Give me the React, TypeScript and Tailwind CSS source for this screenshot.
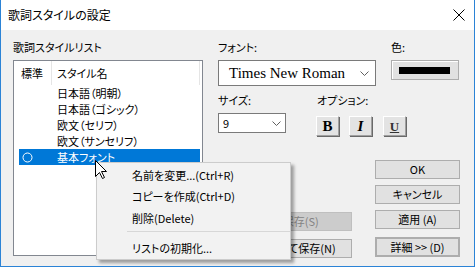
import React from "react";

const jp = "font-['Noto_Sans_CJK_JP',sans-serif] [font-feature-settings:'palt']";

function Chevron() {
  return (
    <svg width="9" height="5" viewBox="0 0 9 5" className="block">
      <polyline points="0.5,0.5 4.5,4.5 8.5,0.5" fill="none" stroke="#606060" strokeWidth="1" />
    </svg>
  );
}

function Bevel({ children }: { children: React.ReactNode }) {
  return (
    <div className="w-[23px] h-[20px] flex items-center justify-center bg-[#e3e3e3] border border-t-white border-l-white border-r-[#a0a0a0] border-b-[#a0a0a0] shadow-[1px_1px_0_#696969]">
      {children}
    </div>
  );
}

function Btn({ children, cls = "" }: { children: React.ReactNode; cls?: string }) {
  return (
    <div className={`flex items-center justify-center bg-[#e1e1e1] border border-[#adadad] text-[11px] leading-none ${cls}`}>
      {children}
    </div>
  );
}

export default function App() {
  const items = ["日本語（明朝）", "日本語（ゴシック）", "欧文（セリフ）", "欧文（サンセリフ）"];
  return (
    <div className={`relative w-[475px] h-[267px] overflow-hidden flex flex-col bg-white border-x border-b border-[#2b83d6] text-black ${jp}`}>
      {/* Title bar */}
      <div className="h-[30px] flex items-center justify-between bg-white pl-[7px] pr-[9px]">
        <span className="text-[12px] leading-none">歌詞スタイルの設定</span>
        <svg width="12" height="12" viewBox="0 0 12 12">
          <path d="M0.5 0.5 L11.5 11.5 M11.5 0.5 L0.5 11.5" stroke="#000" strokeWidth="1" />
        </svg>
      </div>

      {/* Content */}
      <div className="flex-1 bg-[#f0f0f0] flex pl-[12px]">
        {/* Left column */}
        <div className="w-[190px] pt-[11px] flex flex-col">
          <div className="h-[12px] text-[11px] leading-[12px]">歌詞スタイルリスト</div>
          <div className="mt-[7px] h-[196px] border border-[#828790] bg-white flex flex-col">
            <div className="h-[24px] flex text-[11px]">
              <div className="w-[38px] border-r border-[#e5e5e5] pl-[7px] flex items-center">標準</div>
              <div className="w-[148px] border-r border-[#e5e5e5] pl-[5px] flex items-center">スタイル名</div>
            </div>
            {items.map((t) => (
              <div key={t} className="h-[16px] flex items-center pl-[43px] text-[11px] leading-[16px]">
                {t}
              </div>
            ))}
            <div className="ml-[5px] w-[181px] h-[16px] bg-[#0078d7] text-white flex items-center text-[11px]">
              <div className="w-[38px] pl-[3px] flex items-center">
                <svg width="11" height="11" viewBox="0 0 11 11">
                  <circle cx="5.5" cy="5.5" r="4.5" fill="none" stroke="#fff" strokeWidth="1" />
                </svg>
              </div>
              <span>基本フォント</span>
            </div>
          </div>
        </div>

        {/* Right area */}
        <div className="ml-[15px] w-[242px] pt-[11px] flex flex-col">
          {/* Row 1 */}
          <div className="flex items-start">
            <div className="w-[158px] flex flex-col">
              <div className="h-[12px] text-[11px] leading-[12px]">フォント:</div>
              <div className="mt-[7px] h-[26px] border border-[#7a7a7a] bg-white flex items-center justify-between pl-[10px] pr-[6px]">
                <span className="font-['Liberation_Serif',serif] text-[15px] leading-none [font-feature-settings:normal]">Times New Roman</span>
                <Chevron />
              </div>
            </div>
            <div className="ml-[15px] w-[68px] flex flex-col">
              <div className="h-[12px] text-[11px] leading-[12px]">色:</div>
              <div className="mt-[7px] h-[20px] bg-[#e1e1e1] border border-[#adadad] shadow-[inset_1px_1px_0_#fff] pl-[7px] pt-[6px]">
                <div className="w-[51px] h-[7px] bg-black" />
              </div>
            </div>
          </div>

          {/* Row 2 */}
          <div className="mt-[8px] flex items-start">
            <div className="w-[68px] flex flex-col">
              <div className="h-[12px] text-[11px] leading-[12px]">サイズ:</div>
              <div className="mt-[7px] h-[20px] border border-[#7a7a7a] bg-white flex items-center justify-between pl-[4px] pr-[4px]">
                <span className="text-[11px] leading-none">9</span>
                <Chevron />
              </div>
            </div>
            <div className="ml-[30px] flex flex-col">
              <div className="h-[12px] text-[11px] leading-[12px] pl-[1px]">オプション:</div>
              <div className="mt-[10px] flex">
                <Bevel>
                  <span className="font-['Liberation_Serif',serif] font-bold text-[15px] leading-none">B</span>
                </Bevel>
                <div className="ml-[10px]">
                  <Bevel>
                    <span className="font-['Liberation_Serif',serif] font-bold italic text-[15px] leading-none">I</span>
                  </Bevel>
                </div>
                <div className="ml-[11px]">
                  <Bevel>
                    <span className="font-['Liberation_Serif',serif] font-bold text-[13px] leading-none underline text-[#333]">U</span>
                  </Bevel>
                </div>
              </div>
            </div>
          </div>

          {/* Bottom buttons */}
          <div className="flex items-start">
            <div className="w-[134px] flex flex-col">
              <div className="mt-[76px] h-[19px] flex items-center justify-center bg-[#cccccc] border border-[#bfbfbf] text-[#838383] text-[11px] leading-none">
                上書き保存(S)
              </div>
              <Btn cls="mt-[8px] h-[19px]">名前を付けて保存(N)</Btn>
            </div>
            <div className="ml-[23px] w-[85px] flex flex-col">
              <Btn cls="mt-[24px] h-[19px]">OK</Btn>
              <Btn cls="mt-[6px] h-[19px]">キャンセル</Btn>
              <Btn cls="mt-[6px] h-[19px]">適用 (A)</Btn>
              <Btn cls="mt-[8px] h-[20px] border-2 border-[#0078d7]">詳細 &gt;&gt; (D)</Btn>
            </div>
          </div>
        </div>
      </div>

      {/* Context menu */}
      <div className="absolute left-[95px] top-[162px] w-[195px] h-[98px] bg-[#f2f2f2] border border-[#cccccc] shadow-[3px_3px_3px_rgba(0,0,0,0.35)] flex flex-col pt-[1px] text-[11px]">
        <div className="h-[22px] flex items-center pl-[35px]">名前を変更...(Ctrl+R)</div>
        <div className="h-[22px] flex items-center pl-[35px]">コピーを作成(Ctrl+D)</div>
        <div className="h-[22px] flex items-center pl-[35px]">削除(Delete)</div>
        <div className="mt-[2px] mb-[5px] ml-[30px] h-px bg-[#d7d7d7]" />
        <div className="h-[22px] flex items-center pl-[35px]">リストの初期化...</div>
      </div>

      {/* Cursor */}
      <svg className="absolute left-[94px] top-[160px]" width="13" height="20" viewBox="0 0 13 20">
        <path d="M0.5 0.5 L0.5 16.5 L4.5 12.5 L7.5 18.5 L9.5 17.5 L6.5 11.5 L11.5 11.5 Z" fill="#fff" stroke="#000" strokeWidth="1" strokeLinejoin="miter" />
      </svg>
    </div>
  );
}
